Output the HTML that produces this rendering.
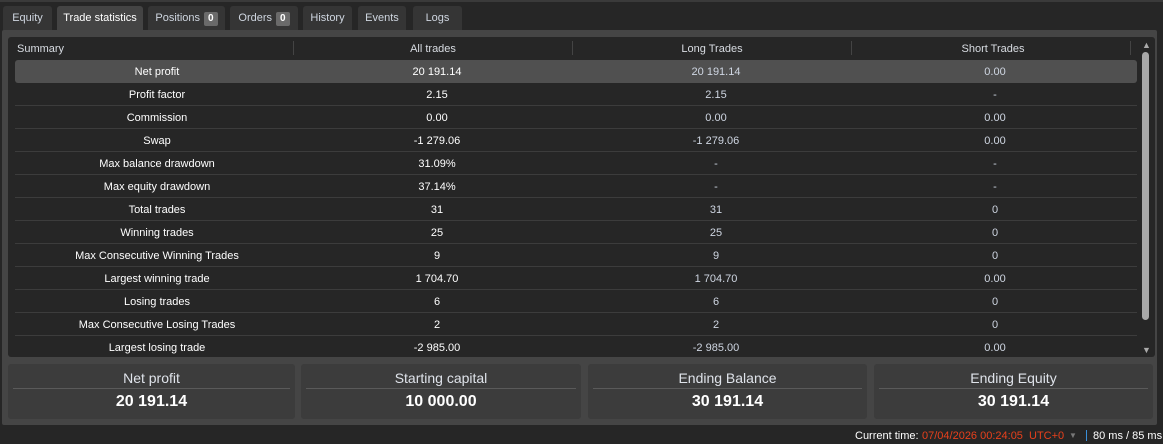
<!DOCTYPE html><html><head><style>
*{box-sizing:border-box;margin:0;padding:0}
body{width:1163px;height:444px;background:#262626;font-family:"Liberation Sans",Arial,sans-serif;font-size:11px;color:#fff;position:relative;overflow:hidden}
.topline{position:absolute;left:0;top:0;width:1163px;height:2px;background:#3a3a3a}
.tab{position:absolute;top:6px;height:24px;background:#353535;color:#cfd6e0;border-radius:3px 3px 0 0;line-height:25px;text-align:center;font-size:11px}
.tab.act{background:#444;color:#fff}
.badge{display:inline-block;background:#6a6a6a;color:#fff;border-radius:2px;font-size:10px;padding:0 4px;line-height:14px;margin-left:4px;font-weight:bold}
.panel{position:absolute;left:2px;top:30px;width:1155px;height:395px;background:#454545;border-radius:2px}
.table{position:absolute;left:8px;top:37px;width:1147px;height:320px;background:#262626;border-radius:3px}
.hdr{position:absolute;top:42px;height:14px;line-height:14px;color:#d8dce2;font-size:11px}
.sep{position:absolute;top:41px;width:1px;height:14px;background:#444}
.row{position:absolute;left:15px;width:1122px;height:23px;border-bottom:1px solid #3c3c3c}
.row.hl{background:#505050;border-radius:3px;border-bottom:none}
.c{position:absolute;top:1px;line-height:23px;text-align:center;width:280px}
.c1{left:2px}.c2{left:282px}.c3{left:561px;color:#cfd6e2}.c4{left:840px;color:#cfd6e2}
.card{position:absolute;top:364px;height:55px;background:#3c3c3c;border-radius:3px;text-align:center}
.card .t{font-size:14px;color:#dfe3ea;line-height:16px;margin-top:6px}
.card .l{margin:2px 5px 0;height:1px;background:#5a5a5a}
.card .v{font-size:16px;font-weight:bold;line-height:20px;margin-top:3px}
.sb{position:absolute;left:1142px;top:52px;width:7px;height:268px;background:#a8a8a8;border-radius:4px}
.status{position:absolute;top:430px;font-size:11px;line-height:12px}
</style></head><body>
<div class="topline"></div>
<div class="tab" style="left:3px;width:49px">Equity</div>
<div class="tab act" style="left:57px;width:86px">Trade statistics</div>
<div class="tab" style="left:148px;width:77px">Positions<span class="badge">0</span></div>
<div class="tab" style="left:230px;width:68px">Orders<span class="badge">0</span></div>
<div class="tab" style="left:303px;width:49px">History</div>
<div class="tab" style="left:358px;width:48px">Events</div>
<div class="tab" style="left:413px;width:49px">Logs</div>
<div class="panel"></div>
<div class="table"></div>
<div class="hdr" style="left:17px">Summary</div>
<div class="sep" style="left:293px"></div>
<div class="hdr" style="left:293px;width:280px;text-align:center">All trades</div>
<div class="sep" style="left:572px"></div>
<div class="hdr" style="left:572px;width:280px;text-align:center">Long Trades</div>
<div class="sep" style="left:851px"></div>
<div class="hdr" style="left:851px;width:284px;text-align:center">Short Trades</div>
<div class="sep" style="left:1130px"></div>
<div style="position:absolute;left:1142px;top:40px;color:#aaa;font-size:9px">▲</div>
<div style="position:absolute;left:1142px;top:345px;color:#aaa;font-size:9px">▼</div>
<div class="sb"></div>
<div class="row hl" style="top:60px"><div class="c c1">Net profit</div><div class="c c2">20 191.14</div><div class="c c3">20 191.14</div><div class="c c4">0.00</div></div>
<div class="row" style="top:83px"><div class="c c1">Profit factor</div><div class="c c2">2.15</div><div class="c c3">2.15</div><div class="c c4">-</div></div>
<div class="row" style="top:106px"><div class="c c1">Commission</div><div class="c c2">0.00</div><div class="c c3">0.00</div><div class="c c4">0.00</div></div>
<div class="row" style="top:129px"><div class="c c1">Swap</div><div class="c c2">-1 279.06</div><div class="c c3">-1 279.06</div><div class="c c4">0.00</div></div>
<div class="row" style="top:152px"><div class="c c1">Max balance drawdown</div><div class="c c2">31.09%</div><div class="c c3">-</div><div class="c c4">-</div></div>
<div class="row" style="top:175px"><div class="c c1">Max equity drawdown</div><div class="c c2">37.14%</div><div class="c c3">-</div><div class="c c4">-</div></div>
<div class="row" style="top:198px"><div class="c c1">Total trades</div><div class="c c2">31</div><div class="c c3">31</div><div class="c c4">0</div></div>
<div class="row" style="top:221px"><div class="c c1">Winning trades</div><div class="c c2">25</div><div class="c c3">25</div><div class="c c4">0</div></div>
<div class="row" style="top:244px"><div class="c c1">Max Consecutive Winning Trades</div><div class="c c2">9</div><div class="c c3">9</div><div class="c c4">0</div></div>
<div class="row" style="top:267px"><div class="c c1">Largest winning trade</div><div class="c c2">1 704.70</div><div class="c c3">1 704.70</div><div class="c c4">0.00</div></div>
<div class="row" style="top:290px"><div class="c c1">Losing trades</div><div class="c c2">6</div><div class="c c3">6</div><div class="c c4">0</div></div>
<div class="row" style="top:313px"><div class="c c1">Max Consecutive Losing Trades</div><div class="c c2">2</div><div class="c c3">2</div><div class="c c4">0</div></div>
<div class="row" style="top:336px;border-bottom:none"><div class="c c1">Largest losing trade</div><div class="c c2">-2 985.00</div><div class="c c3">-2 985.00</div><div class="c c4">0.00</div></div>
<div class="card" style="left:8px;width:287px"><div class="t">Net profit</div><div class="l"></div><div class="v">20 191.14</div></div>
<div class="card" style="left:301px;width:280px"><div class="t">Starting capital</div><div class="l"></div><div class="v">10 000.00</div></div>
<div class="card" style="left:588px;width:279px"><div class="t">Ending Balance</div><div class="l"></div><div class="v">30 191.14</div></div>
<div class="card" style="left:874px;width:279px"><div class="t">Ending Equity</div><div class="l"></div><div class="v">30 191.14</div></div>
<div class="status" style="left:855px;color:#fff">Current time:</div>
<div class="status" style="left:922px;color:#e8401c">07/04/2026 00:24:05</div>
<div class="status" style="left:1029px;color:#e8401c">UTC+0</div>
<div class="status" style="left:1069px;color:#777;font-size:8px">▼</div>
<div class="status" style="left:1086px;width:1px;height:11px;background:#3a8fd8"></div>
<div class="status" style="left:1093px;color:#fff">80 ms / 85 ms</div>
</body></html>
